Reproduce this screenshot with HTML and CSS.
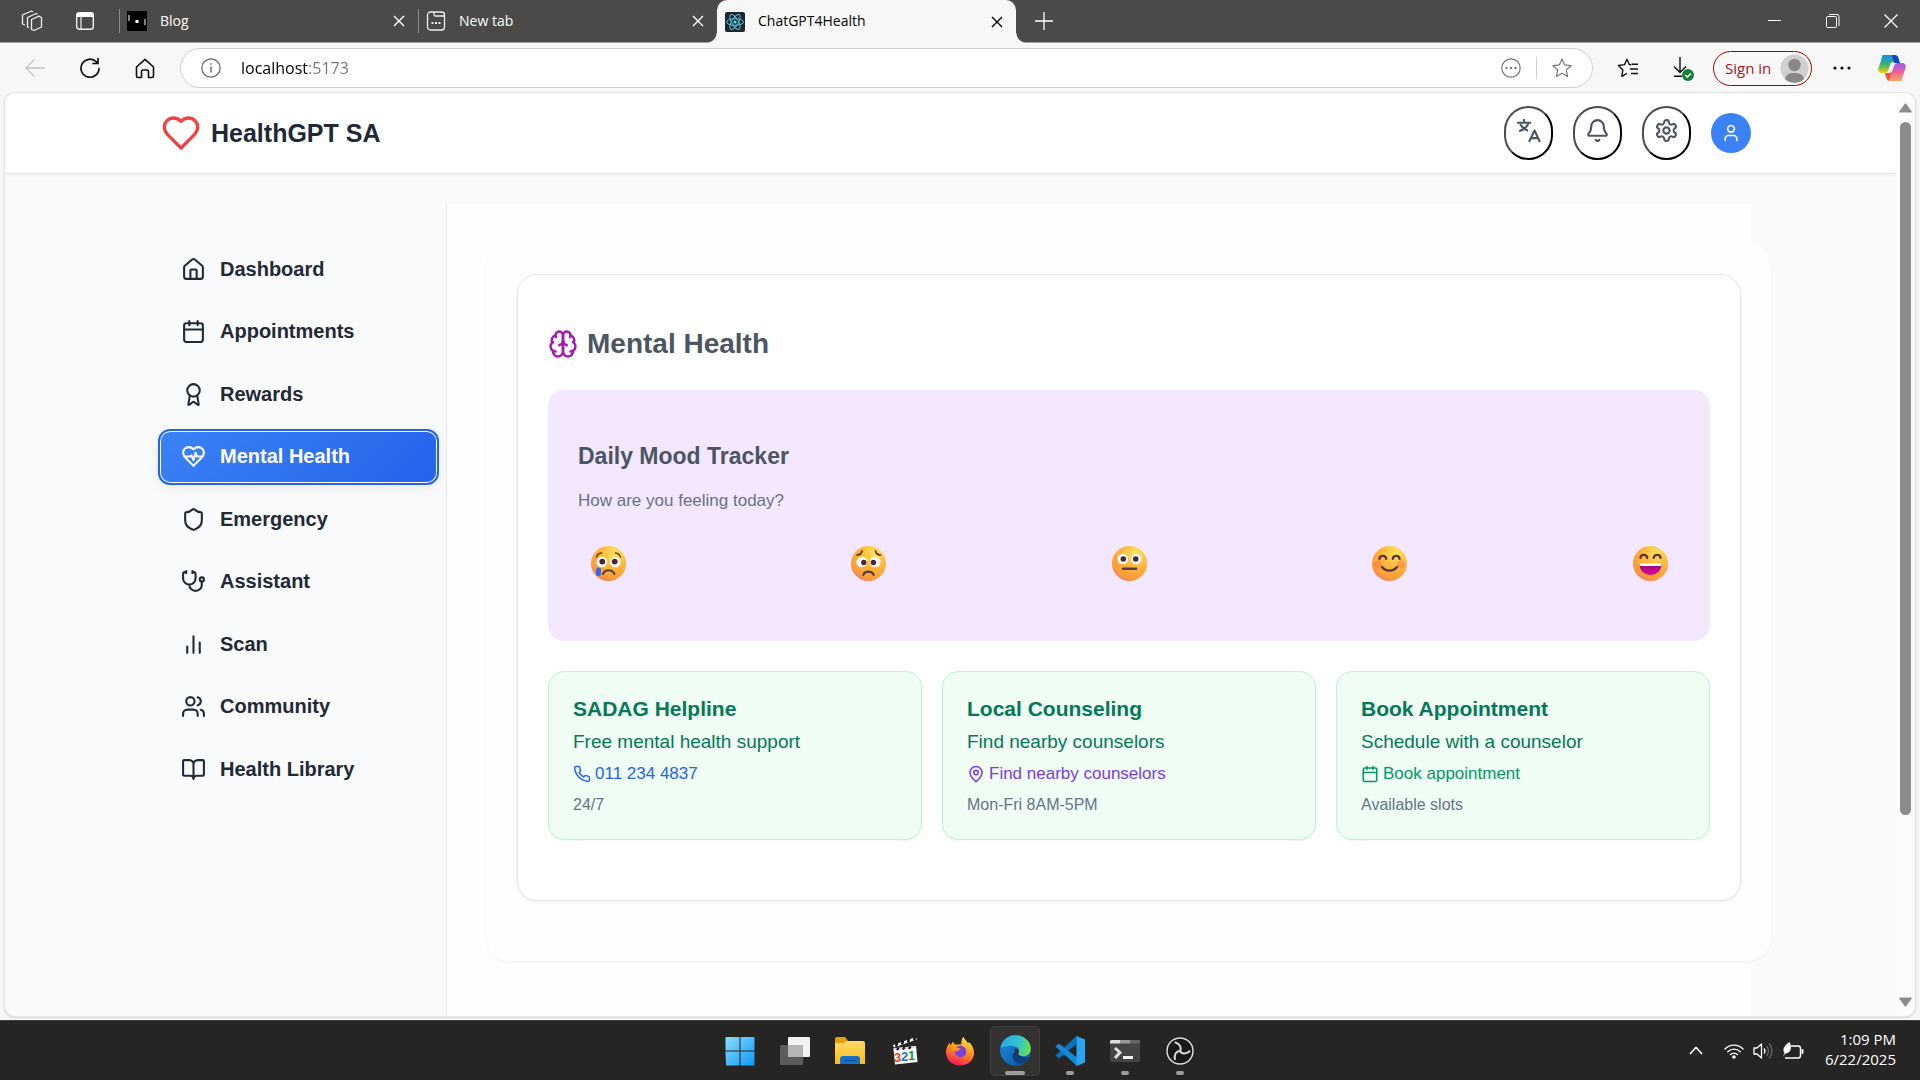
FILE: index.html
```html
<!DOCTYPE html>
<html lang="en">
<head>
<meta charset="utf-8">
<meta name="viewport" content="width=device-width, initial-scale=1">
<title>ChatGPT4Health</title>
<link rel="stylesheet" href="styles.css">
</head>
<body>
<svg class="defs" aria-hidden="true">
  <defs>
    <radialGradient id="face" cx="0.68" cy="0.2" r="0.95">
      <stop offset="0" stop-color="#ffe45c"/><stop offset="0.45" stop-color="#fdb53c"/><stop offset="0.78" stop-color="#fb9c37"/><stop offset="1" stop-color="#e8618c"/>
    </radialGradient>
    <linearGradient id="mouth" x1="0" y1="0" x2="0" y2="1"><stop offset="0" stop-color="#8b0a93"/><stop offset="1" stop-color="#e5088a"/></linearGradient>
    <linearGradient id="win" x1="0" y1="0" x2="1" y2="1"><stop offset="0" stop-color="#8be0fb"/><stop offset="1" stop-color="#0c97f4"/></linearGradient>
    <linearGradient id="folder" x1="0" y1="0" x2="0" y2="1"><stop offset="0" stop-color="#ffd968"/><stop offset="1" stop-color="#fbbd1d"/></linearGradient>
    <linearGradient id="fox" x1="0.7" y1="0" x2="0.3" y2="1"><stop offset="0" stop-color="#ffe83f"/><stop offset="0.5" stop-color="#ff8a1c"/><stop offset="1" stop-color="#f5135f"/></linearGradient>
    <linearGradient id="edgeTop" x1="0" y1="0.4" x2="1" y2="0.6"><stop offset="0" stop-color="#29a8e8"/><stop offset="0.6" stop-color="#34c6c6"/><stop offset="1" stop-color="#6ddf4c"/></linearGradient>
    <linearGradient id="edgeLow" x1="0" y1="0" x2="1" y2="1"><stop offset="0" stop-color="#1c8fe0"/><stop offset="1" stop-color="#0b4f9e"/></linearGradient>
    <linearGradient id="copA" x1="0" y1="0" x2="0" y2="1"><stop offset="0" stop-color="#1b8fe6"/><stop offset="0.5" stop-color="#2fb27a"/><stop offset="1" stop-color="#f5d000"/></linearGradient>
    <linearGradient id="copB" x1="0" y1="0" x2="0" y2="1"><stop offset="0" stop-color="#a05af0"/><stop offset="0.5" stop-color="#ee5f9c"/><stop offset="1" stop-color="#fbaa60"/></linearGradient>
  </defs>
</svg>

<div class="desktop">
  <div class="tabstrip">
    <div class="strip-tools">
      <button class="chrome-btn" aria-label="Workspaces"><svg width="22" height="22" viewBox="0 0 22 22" fill="none" stroke="#eee" stroke-width="1.3" stroke-linejoin="round"><path d="M10.500 9.500L18 6.200l2.500 1.300v9.500L13 20.500l-2.500-1zM8 17.500L6.500 17V7.500L15 3.500l1.500.8M4 15L1.500 14V5L10.500 1l1.500.8"/></svg></button>
      <button class="chrome-btn" aria-label="Tab actions"><svg width="20" height="20" viewBox="0 0 20 20"><rect x="1.700" y="1.700" width="16.600" height="16.600" rx="2.500" fill="none" stroke="#eee" stroke-width="1.400"/><path d="M1.500 6V3.500a2 2 0 0 1 2-2h13a2 2 0 0 1 2 2V6z" fill="#fff"/><path d="M6 6v12" stroke="#eee" stroke-width="1.200"/></svg></button>
    </div>
    <div class="tab">
      <svg width="20" height="20" viewBox="0 0 20 20"><path d="M0 0h20v20H0z"/><path d="M2 4v6M18 8v6" stroke="#fff"/><path d="M8.500 9h3v3h-3z" fill="#fff"/></svg>
      <span class="tab-title">Blog</span>
      <button class="tab-close" aria-label="Close tab"><svg width="12" height="12" viewBox="0 0 12 12"><path d="M1 1l10 10M11 1L1 11" stroke="currentColor" stroke-width="1.400"/></svg></button>
    </div>
    <div class="tab">
      <svg width="20" height="20" viewBox="0 0 20 20" fill="none" stroke="#eee" stroke-width="1.300"><rect x="1.500" y="1" width="17" height="18" rx="3"/><path d="M8 1v2.500A1.500 1.500 0 0 0 9.500 5h9"/><path d="M5.500 12h2M9 12h2M12.500 12h2" stroke-width="2"/></svg>
      <span class="tab-title">New tab</span>
      <button class="tab-close" aria-label="Close tab"><svg width="12" height="12" viewBox="0 0 12 12"><path d="M1 1l10 10M11 1L1 11" stroke="currentColor" stroke-width="1.400"/></svg></button>
    </div>
    <div class="tab tab-active">
      <svg width="20" height="20" viewBox="0 0 20 20"><rect width="20" height="20" rx="2" fill="#23272d"/><g fill="none" stroke="#4cc3dc" stroke-width="1"><ellipse cx="10" cy="10" rx="8.500" ry="3.300"/><ellipse cx="10" cy="10" rx="8.500" ry="3.300" transform="rotate(60 10 10)"/><ellipse cx="10" cy="10" rx="8.500" ry="3.300" transform="rotate(120 10 10)"/></g><circle cx="10" cy="10" r="1.600" fill="#61dafb"/></svg>
      <span class="tab-title">ChatGPT4Health</span>
      <button class="tab-close" aria-label="Close tab"><svg width="12" height="12" viewBox="0 0 12 12"><path d="M1 1l10 10M11 1L1 11" stroke="currentColor" stroke-width="1.400"/></svg></button>
    </div>
    <button class="chrome-btn" aria-label="New tab"><svg width="18" height="18" viewBox="0 0 18 18"><path d="M9 0v18M0 9h18" stroke="#fff" stroke-width="1.300"/></svg></button>
    <div class="window-controls">
      <button class="chrome-btn" aria-label="Minimize"><svg width="14" height="14" viewBox="0 0 14 14"><path d="M0 6.500h13" stroke="#fff"/></svg></button>
      <button class="chrome-btn" aria-label="Restore"><svg width="14" height="14" viewBox="0 0 14 14" fill="none" stroke="#fff"><path d="M.5 3.500a1 1 0 0 1 1-1h8a1 1 0 0 1 1 1v9a1 1 0 0 1-1 1h-8a1 1 0 0 1-1-1zM3 .5h8a2 2 0 0 1 2 2V12"/></svg></button>
      <button class="chrome-btn" aria-label="Close"><svg width="14" height="14" viewBox="0 0 14 14"><path d="M.5 .5l13 13M13.500 .5l-13 13" stroke="#fff" stroke-width="1.200"/></svg></button>
    </div>
  </div>

  <div class="toolbar">
    <button class="chrome-btn" aria-label="Back" disabled><svg width="20" height="18" viewBox="0 0 20 18" fill="none" stroke="#c4c4c4" stroke-width="1.300"><path d="M20 9H1M9.500 .5L1 9l8.500 8.500"/></svg></button>
    <button class="chrome-btn" aria-label="Refresh"><svg width="22" height="22" viewBox="0 0 22 22" fill="none" stroke="#111" stroke-width="1.700" stroke-linecap="round" stroke-linejoin="round"><path d="M20 11.500A9 9 0 1 1 17.500 5L19 6.500M19 1.500v5h-5"/></svg></button>
    <button class="chrome-btn" aria-label="Home"><svg width="20" height="21" viewBox="0 0 20 21" fill="none" stroke="#111" stroke-width="1.600" stroke-linejoin="round"><path d="M1.500 9L10 1.300 18.500 9v9a1.500 1.500 0 0 1-1.500 1.500h-3.500v-6a1.500 1.500 0 0 0-1.500-1.500H8a1.500 1.500 0 0 0-1.500 1.500v6H3A1.500 1.500 0 0 1 1.500 18z"/></svg></button>
    <div class="address">
      <svg width="20" height="20" viewBox="0 0 20 20" fill="none" stroke="#666" stroke-width="1.200"><circle cx="10" cy="10" r="9.200"/><path d="M10 8.500v6M10 5.200v1.500" stroke-width="1.400"/></svg>
      <input class="url" type="text" value="localhost:5173" aria-label="Address">
      <button class="address-btn" aria-label="More actions"><svg width="20" height="20" viewBox="0 0 20 20"><circle cx="10" cy="10" r="9.200" fill="none" stroke="#777" stroke-width="1.200"/><g fill="#777"><circle cx="5.500" cy="10" r="1.200"/><circle cx="10" cy="10" r="1.200"/><circle cx="14.500" cy="10" r="1.200"/></g></svg></button>
      <span class="address-sep"></span>
      <button class="address-btn" aria-label="Add to favorites"><svg width="20" height="20" viewBox="0 0 20 20" fill="none" stroke="#777" stroke-width="1.200" stroke-linejoin="round"><path d="M10 1l2.700 5.900 6.300.8-4.700 4.400 1.300 6.400L10 15.300l-5.600 3.200 1.300-6.400L1 7.700l6.300-.8z"/></svg></button>
    </div>
    <button class="chrome-btn" aria-label="Favorites"><svg width="22" height="20" viewBox="0 0 22 20" fill="none" stroke="#111" stroke-width="1.400" stroke-linejoin="round"><path d="M14 6.800l-1.700-.3L10 1.300 7.500 6.600 1.500 7.500l4.300 4.600-1 6.200L10 15.400M14.500 6.200H21M13 11h8M14 15.500h7"/></svg></button>
    <button class="chrome-btn" aria-label="Downloads"><svg width="22" height="26" viewBox="0 0 22 26" fill="none"><path d="M8 2v15M2 11.500l6 6 6-6M2 21.300h8" stroke="#111" stroke-width="1.400"/><circle cx="16" cy="20" r="6" fill="#168039"/><path d="M13.300 20l2 2 3.600-3.600" stroke="#fff" stroke-width="1.400"/></svg></button>
    <button class="signin"><span>Sign in</span><svg width="29" height="29" viewBox="0 0 29 29"><circle cx="14.500" cy="14.500" r="14" fill="#d2d0ce"/><circle cx="14.500" cy="11" r="6.200" fill="#8a8886"/><path d="M5 25c1-5 5-6 9.500-6s8.500 1 9.500 6a14 14 0 0 1-19 0z" fill="#8a8886"/></svg></button>
    <button class="chrome-btn" aria-label="Settings and more"><svg width="18" height="6" viewBox="0 0 18 6" fill="#111"><circle cx="2" cy="3" r="1.600"/><circle cx="9" cy="3" r="1.600"/><circle cx="16" cy="3" r="1.600"/></svg></button>
    <button class="chrome-btn copilot" aria-label="Copilot"><svg width="28" height="26" viewBox="0 0 28 26"><path d="M5 0h11c2 0 3 1.500 3.500 3l1 4h-5c-2 0-3 1-3.500 3l-1.500 5c-.7 2-2 3-4 3H4c-3 0-4.500-2-3.500-5l3-9C4 1.500 4 0 5 0z" fill="url(#copA)"/><path d="M14 0h3c2 0 3 1.500 3.500 3l1.500 5h-6z" fill="#1247c4"/><path d="M23 26H12c-2 0-3-1.500-3.500-3L7 18h4c2 0 3-1 3.500-3l1.500-4c.7-2 2-3 4-3h4c3 0 4.500 2 3.500 5l-3 9c-.5 2.500-.5 4-1.500 4z" fill="url(#copB)"/><path d="M7 18h5l1.500-1L11 26c-1.500-.5-2-2-2.500-3z" fill="#f2542d"/></svg></button>
  </div>

  <div class="viewport">
    <div class="page">
      <header class="app-header">
        <div class="brand">
          <svg class="lucide" width="40" height="40" viewBox="0 0 24 24"><path d="M19 14c1.490-1.460 3-3.210 3-5.500A5.500 5.500 0 0 0 16.500 3c-1.760 0-3 .5-4.500 2-1.500-1.500-2.740-2-4.500-2A5.500 5.500 0 0 0 2 8.500c0 2.300 1.500 4.050 3 5.500l7 7Z"/></svg>
          <h1>HealthGPT SA</h1>
        </div>
        <div class="header-actions">
          <button class="round-btn" aria-label="Language"><svg class="lucide" width="25" height="25" viewBox="0 0 24 24"><path d="M1 4.500h13.500M7.800 1v3.500M12 4.800c-1.200 3.700-4.500 6.500-9 8M4 6c1.800 3.300 4.500 5 7.500 6.200M12.500 23L17.800 12l5.200 11M14.300 19.300h7" stroke-linecap="butt"/></svg></button>
          <button class="round-btn" aria-label="Notifications"><svg class="lucide" width="25" height="25" viewBox="0 0 24 24"><path d="M10.268 21a2 2 0 0 0 3.464 0M3.262 15.326A1 1 0 0 0 4 17h16a1 1 0 0 0 .74-1.673C19.410 13.956 18 12.499 18 8A6 6 0 0 0 6 8c0 4.499-1.411 5.956-2.738 7.326"/></svg></button>
          <button class="round-btn" aria-label="Settings"><svg class="lucide" width="25" height="25" viewBox="0 0 24 24"><path d="M12.220 2h-.44a2 2 0 0 0-2 2v.18a2 2 0 0 1-1 1.730l-.43.25a2 2 0 0 1-2 0l-.15-.08a2 2 0 0 0-2.730.73l-.22.38a2 2 0 0 0 .73 2.730l.15.1a2 2 0 0 1 1 1.720v.51a2 2 0 0 1-1 1.740l-.15.09a2 2 0 0 0-.73 2.730l.22.38a2 2 0 0 0 2.730.73l.15-.08a2 2 0 0 1 2 0l.43.25a2 2 0 0 1 1 1.730V20a2 2 0 0 0 2 2h.44a2 2 0 0 0 2-2v-.18a2 2 0 0 1 1-1.730l.43-.25a2 2 0 0 1 2 0l.15.08a2 2 0 0 0 2.730-.73l.22-.39a2 2 0 0 0-.73-2.730l-.15-.08a2 2 0 0 1-1-1.740v-.5a2 2 0 0 1 1-1.740l.15-.09a2 2 0 0 0 .73-2.730l-.22-.38a2 2 0 0 0-2.730-.73l-.15.08a2 2 0 0 1-2 0l-.43-.25a2 2 0 0 1-1-1.730V4a2 2 0 0 0-2-2z"/><circle cx="12" cy="12" r="3"/></svg></button>
          <button class="avatar" aria-label="Account"><svg class="lucide" width="20" height="20" viewBox="0 0 24 24"><circle cx="12" cy="7" r="4"/><path d="M19 21v-2a4 4 0 0 0-4-4H9a4 4 0 0 0-4 4v2"/></svg></button>
        </div>
      </header>

      <div class="layout">
        <nav class="sidebar" aria-label="Main">
          <button class="nav-item"><svg class="lucide" width="25" height="25" viewBox="0 0 24 24"><path d="M15 21v-8a1 1 0 0 0-1-1h-4a1 1 0 0 0-1 1v8M3 10a2 2 0 0 1 .709-1.528l7-5.999a2 2 0 0 1 2.582 0l7 5.999A2 2 0 0 1 21 10v9a2 2 0 0 1-2 2H5a2 2 0 0 1-2-2z"/></svg>Dashboard</button>
          <button class="nav-item"><svg class="lucide" width="25" height="25" viewBox="0 0 24 24"><path d="M8 2v4M16 2v4M3 10h18"/><rect x="3" y="4" width="18" height="18" rx="2"/></svg>Appointments</button>
          <button class="nav-item"><svg class="lucide" width="25" height="25" viewBox="0 0 24 24"><path d="m15.477 12.890 1.515 8.526a.5.5 0 0 1-.81.47l-3.580-2.687a1 1 0 0 0-1.197 0l-3.586 2.686a.5.5 0 0 1-.81-.469l1.514-8.526"/><circle cx="12" cy="8" r="6"/></svg>Rewards</button>
          <button class="nav-item nav-active" aria-current="page"><svg class="lucide" width="25" height="25" viewBox="0 0 24 24"><path d="M19 14c1.490-1.460 3-3.210 3-5.500A5.500 5.500 0 0 0 16.500 3c-1.760 0-3 .5-4.500 2-1.500-1.500-2.740-2-4.500-2A5.500 5.500 0 0 0 2 8.500c0 2.300 1.500 4.050 3 5.500l7 7Z"/><path d="M3.220 12H9.500l.5-1 2 4.500 2-7 1.500 3.500h5.270"/></svg>Mental Health</button>
          <button class="nav-item"><svg class="lucide" width="25" height="25" viewBox="0 0 24 24"><path d="M20 13c0 5-3.500 7.500-7.660 8.950a1 1 0 0 1-.67-.01C7.500 20.500 4 18 4 13V6a1 1 0 0 1 1-1c2 0 4.500-1.200 6.240-2.720a1.170 1.170 0 0 1 1.520 0C14.510 3.810 17 5 19 5a1 1 0 0 1 1 1z"/></svg>Emergency</button>
          <button class="nav-item"><svg class="lucide" width="25" height="25" viewBox="0 0 24 24"><path d="M11 2v2M5 2v2M5 3H4a2 2 0 0 0-2 2v4a6 6 0 0 0 12 0V5a2 2 0 0 0-2-2h-1M8 15a6 6 0 0 0 12 0v-3"/><circle cx="20" cy="10" r="2"/></svg>Assistant</button>
          <button class="nav-item"><svg class="lucide" width="25" height="25" viewBox="0 0 24 24"><path d="M18 20V10M12 20V4M6 20v-6"/></svg>Scan</button>
          <button class="nav-item"><svg class="lucide" width="25" height="25" viewBox="0 0 24 24"><path d="M16 21v-2a4 4 0 0 0-4-4H6a4 4 0 0 0-4 4v2M22 21v-2a4 4 0 0 0-3-3.870M16 3.130a4 4 0 0 1 0 7.750"/><circle cx="9" cy="7" r="4"/></svg>Community</button>
          <button class="nav-item"><svg class="lucide" width="25" height="25" viewBox="0 0 24 24"><path d="M12 7v14M3 18a1 1 0 0 1-1-1V4a1 1 0 0 1 1-1h5a4 4 0 0 1 4 4 4 4 0 0 1 4-4h5a1 1 0 0 1 1 1v13a1 1 0 0 1-1 1h-6a3 3 0 0 0-3 3 3 3 0 0 0-3-3z"/></svg>Health Library</button>
        </nav>

        <main class="content">
          <div class="panel">
            <section class="card">
              <h2><svg class="lucide" width="30" height="30" viewBox="0 0 24 24"><path d="M12 5a3 3 0 1 0-5.997.125 4 4 0 0 0-2.526 5.770 4 4 0 0 0 .556 6.588A4 4 0 1 0 12 18Z"/><path d="M12 5a3 3 0 1 1 5.997.125 4 4 0 0 1 2.526 5.770 4 4 0 0 1-.556 6.588A4 4 0 1 1 12 18Z"/><path d="M15 13a4.500 4.500 0 0 1-3-4 4.500 4.500 0 0 1-3 4M17.599 6.500a3 3 0 0 0 .399-1.375M6.003 5.125A3 3 0 0 0 6.401 6.500M3.477 10.896a4 4 0 0 1 .585-.396M19.938 10.500a4 4 0 0 1 .585.396M6 18a4 4 0 0 1-1.967-.516M19.967 17.484A4 4 0 0 1 18 18"/></svg>Mental Health</h2>

              <div class="mood">
                <h3>Daily Mood Tracker</h3>
                <p>How are you feeling today?</p>
                <div class="mood-row">
                  <button class="mood-btn" aria-label="Very sad"><svg width="35" height="35" viewBox="0 0 35 35"><circle cx="17.500" cy="17.500" r="17.500" fill="url(#face)"/><circle cx="10.800" cy="16" r="5.300" fill="#fff"/><circle cx="24.200" cy="16" r="5.300" fill="#fff"/><circle cx="11.300" cy="15.600" r="2.900" fill="#4b2436"/><circle cx="23.700" cy="15.600" r="2.900" fill="#4b2436"/><path d="M5.500 11c1-2.500 3-3.800 5-4M29.500 11c-1-2.500-3-3.800-5-4" fill="none" stroke="#5f3228" stroke-width="1.500" stroke-linecap="round"/><path d="M12 28c2-5 9-5 11.500 0" fill="none" stroke="#573a4a" stroke-width="2.100" stroke-linecap="round"/><rect x="5" y="21.500" width="5" height="8.500" rx="2.500" fill="#3566f3"/></svg></button>
                  <button class="mood-btn" aria-label="Sad"><svg width="35" height="35" viewBox="0 0 35 35"><circle cx="17.500" cy="17.500" r="17.500" fill="url(#face)"/><circle cx="10.800" cy="16" r="5.300" fill="#fff"/><circle cx="24.200" cy="16" r="5.300" fill="#fff"/><circle cx="12.800" cy="16.500" r="2.700" fill="#4b2436"/><circle cx="22.400" cy="16.500" r="2.700" fill="#4b2436"/><path d="M6 9c2.500 0 4.500-1.500 5-4M29.500 9c-2.500 0-4.500-1.500-5-4" fill="none" stroke="#5f3228" stroke-width="1.700" stroke-linecap="round"/><path d="M12.300 29c1.500-4.500 8.500-4.500 10.500 0" fill="none" stroke="#573a4a" stroke-width="2.100" stroke-linecap="round"/></svg></button>
                  <button class="mood-btn" aria-label="Neutral"><svg width="35" height="35" viewBox="0 0 35 35"><circle cx="17.500" cy="17.500" r="17.500" fill="url(#face)"/><circle cx="10.800" cy="13" r="5.200" fill="#fff"/><circle cx="24.200" cy="13" r="5.200" fill="#fff"/><circle cx="11.300" cy="13" r="2.800" fill="#4b2436"/><circle cx="23.700" cy="13" r="2.800" fill="#4b2436"/><path d="M11 22.700h13" stroke="#5b3b52" stroke-width="2.600" stroke-linecap="round"/></svg></button>
                  <button class="mood-btn" aria-label="Happy"><svg width="35" height="35" viewBox="0 0 35 35"><circle cx="17.500" cy="17.500" r="17.500" fill="url(#face)"/><circle cx="6" cy="18.500" r="4" fill="#fb6f50" opacity="0.450"/><circle cx="29" cy="18.500" r="4" fill="#fb6f50" opacity="0.450"/><path d="M7.300 13c.5-4.300 6.400-4.300 7 0M20.700 13c.5-4.300 6.400-4.300 7 0" fill="none" stroke="#59363f" stroke-width="2.200" stroke-linecap="round"/><path d="M10 21c3.500 4.700 11.500 4.700 15 0" fill="none" stroke="#59363f" stroke-width="2.200" stroke-linecap="round"/></svg></button>
                  <button class="mood-btn" aria-label="Very happy"><svg width="35" height="35" viewBox="0 0 35 35"><circle cx="17.500" cy="17.500" r="17.500" fill="url(#face)"/><path d="M7.300 12c.5-4.300 6.400-4.300 7 0M20.700 12c.5-4.300 6.400-4.300 7 0" fill="none" stroke="#59363f" stroke-width="2.200" stroke-linecap="round"/><path d="M6.500 17.500h22c.3 6.500-4.500 11.500-11 11.500s-11.300-5-11-11.500z" fill="url(#mouth)"/><path d="M6.500 17.300h22v1.200c0 1-.6 1.500-1.500 1.500H8c-.9 0-1.500-.5-1.500-1.500z" fill="#fff"/></svg></button>
                </div>
              </div>

              <div class="resources">
                <article class="resource">
                  <h3>SADAG Helpline</h3>
                  <p>Free mental health support</p>
                  <a class="link-blue" href="#call"><svg class="lucide" width="18" height="18" viewBox="0 0 24 24"><path d="M22 16.920v3a2 2 0 0 1-2.180 2 19.790 19.790 0 0 1-8.630-3.070 19.500 19.500 0 0 1-6-6 19.790 19.790 0 0 1-3.070-8.670A2 2 0 0 1 4.110 2h3a2 2 0 0 1 2 1.720 12.840 12.840 0 0 0 .7 2.810 2 2 0 0 1-.45 2.110L8.090 9.910a16 16 0 0 0 6 6l1.270-1.270a2 2 0 0 1 2.110-.45 12.840 12.840 0 0 0 2.810.7A2 2 0 0 1 22 16.920z"/></svg>011 234 4837</a>
                  <small>24/7</small>
                </article>
                <article class="resource">
                  <h3>Local Counseling</h3>
                  <p>Find nearby counselors</p>
                  <a class="link-purple" href="#nearby"><svg class="lucide" width="18" height="18" viewBox="0 0 24 24"><path d="M20 10c0 4.993-5.539 10.193-7.399 11.799a1 1 0 0 1-1.202 0C9.539 20.193 4 14.993 4 10a8 8 0 0 1 16 0"/><circle cx="12" cy="10" r="3"/></svg>Find nearby counselors</a>
                  <small>Mon-Fri 8AM-5PM</small>
                </article>
                <article class="resource">
                  <h3>Book Appointment</h3>
                  <p>Schedule with a counselor</p>
                  <a class="link-green" href="#book"><svg class="lucide" width="18" height="18" viewBox="0 0 24 24"><path d="M8 2v4M16 2v4M3 10h18"/><rect x="3" y="4" width="18" height="18" rx="2"/></svg>Book appointment</a>
                  <small>Available slots</small>
                </article>
              </div>
            </section>
          </div>
        </main>
      </div>
    </div>
    <div class="scrollbar" aria-hidden="true">
      <svg width="13" height="10" viewBox="0 0 13 10"><path d="M6.500 .5L12.500 9H.5z" fill="#8b8b8b" stroke="#8b8b8b" stroke-linejoin="round"/></svg>
      <div class="scroll-track"><div class="scroll-thumb"></div></div>
      <svg width="13" height="10" viewBox="0 0 13 10"><path d="M6.500 9.500L12.500 1H.5z" fill="#8b8b8b" stroke="#8b8b8b" stroke-linejoin="round"/></svg>
    </div>
  </div>

  <div class="taskbar">
    <div class="apps">
      <button class="app" aria-label="Start"><svg width="30" height="30" viewBox="0 0 30 30" fill="url(#win)"><path d="M1 1h13.500v13.500H.5V1.500zM15.500 1h14v13.500h-14zM.5 15.500h14v14H1zM15.500 15.500h14v14h-14z"/></svg></button>
      <button class="app" aria-label="Task view"><svg width="30" height="30" viewBox="0 0 30 30"><rect x="8" y="1" width="22" height="20" rx="1" fill="#f3f3f3"/><rect x="0" y="9" width="23" height="20" rx="1" fill="#666" opacity="0.850"/><rect x="8" y="9" width="15" height="12" fill="#b5b5b5"/></svg></button>
      <button class="app" aria-label="File Explorer"><svg width="30" height="28" viewBox="0 0 30 28"><path d="M0 2a2 2 0 0 1 2-2h8l3 4-3 4H0z" fill="#e0a00b"/><path d="M0 6h9l3-2h16a2 2 0 0 1 2 2v21H0z" fill="url(#folder)"/><path d="M5 27v-5a3 3 0 0 1 3-3h14a3 3 0 0 1 3 3v5z" fill="#1173c7"/><path d="M9 23.500h12" stroke="#0a4c8c" stroke-width="1.200"/></svg></button>
      <button class="app" aria-label="Media Player Classic"><svg width="30" height="30" viewBox="0 0 30 30"><path d="M3.500 12.500L26 10l1.500 16L5 28.500z" fill="#fff"/><path d="M3 9L26 1l.8 2.500L4 11.500z" fill="#fff"/><path d="M6 10.500l1-3.500M12 8.500l1-3.500M18 6.500l1-3.500M24 4.500l1-3.500" stroke="#111" stroke-width="2.500"/><path d="M3.500 12.300L26 10l.2 2L3.700 14.500z" fill="#ddd"/><path d="M7 14.200l1.500-2.300M13 13.500l1.500-2.300M19 12.900l1.500-2.300" stroke="#111" stroke-width="2.200"/><text class="clap c3" x="4" y="26">3</text><text class="clap c2" x="11" y="25">2</text><text class="clap c1" x="18" y="24">1</text></svg></button>
      <button class="app" aria-label="Firefox"><svg width="30" height="30" viewBox="0 0 30 30"><path d="M15 29.500C7 29.500 1 24 1 16c0-4 1.500-7 4-9.500l.5 3L8 5.500c.5 1.500 1 2.500 2.500 3H16c1-2.500 0-5.500 2.500-7.500 1 3 3.500 3.500 4.500 6.500l1-1.500c3 3 5 6.500 5 11 0 7-6 12.500-14 12.500z" fill="url(#fox)"/><circle cx="15.500" cy="15.500" r="5.800" fill="#7a3fe0"/><path d="M6 12c3-1.500 7-.5 10 1-2 .5-3 2.500-5.500 2.500z" fill="#ff9b22"/></svg></button>
      <button class="app app-current" aria-label="Edge"><svg width="31" height="31" viewBox="0 0 30 30"><circle cx="15" cy="15" r="14.800" fill="url(#edgeLow)"/><path d="M.5 13C1 6 7 .2 15 .2c8.500 0 14.800 6 14.800 13 0 4.800-3.500 7.300-7.300 7.300-3 0-5-1-5-2 0-.8 1-1.200 1-3.200 0-2.800-3-5-7.500-5-4 0-8 1-10.500 2.700z" fill="url(#edgeTop)"/><path d="M17.500 18.500c0 2 4 5 9.500 3.500l1 .5c-3 5.500-9 6-12 4.500-5-2.500-5.500-10 .5-12.500 2 1.500.8 3 1 4z" fill="#0b3f86"/><path d="M14 13.500c2-1 4.500.3 4.300 2.500-.2 1-.8 1.500-.8 2.500 0 1.500 3.500 3.500 9.800 3-2 1.500-12 3-13.300-8z" fill="#333231"/></svg></button>
      <button class="app app-running" aria-label="Visual Studio Code"><svg width="30" height="30" viewBox="0 0 30 30"><path d="M21.500 0v8L4 22.500 .5 19.500z" fill="#0a72ba"/><path d="M.5 10.500L4 7.500 22 21.500V30z" fill="#1489d8"/><path d="M21.500 0L30 3.500v23L21.500 30z" fill="#2aa5f3"/></svg></button>
      <button class="app app-running" aria-label="Terminal"><svg width="30" height="22" viewBox="0 0 30 22"><rect width="30" height="22" rx="1.500" fill="#444"/><path d="M0 3.500V1.500A1.500 1.500 0 0 1 1.500 0H10v3.500z" fill="#ddd"/><path d="M10 0h10v3.500H10z" fill="#999"/><path d="M20 0h8.500A1.500 1.500 0 0 1 30 1.500v2H20z" fill="#666"/><path d="M5 8l5 4.500L5 18" fill="none" stroke="#ddd" stroke-width="3"/><path d="M13 17.500h10" stroke="#eee" stroke-width="3"/></svg></button>
      <button class="app app-running" aria-label="OBS Studio"><svg width="28" height="28" viewBox="0 0 28 28" fill="none" stroke="#dadada"><circle cx="14" cy="14" r="13" fill="#1a191b" stroke-width="1.500"/><g stroke-width="2" stroke-linecap="round"><path d="M14 14c2-3 0-7-4.500-8.500"/><path d="M14 14c2-3 0-7-4.500-8.500" transform="rotate(120 14 14)"/><path d="M14 14c2-3 0-7-4.500-8.500" transform="rotate(240 14 14)"/></g></svg></button>
    </div>
    <div class="tray">
      <button class="tray-btn" aria-label="Show hidden icons"><svg width="14" height="9" viewBox="0 0 14 9"><path d="M1 8l6-6.500L13 8" fill="none" stroke="#fff" stroke-width="1.600"/></svg></button>
      <button class="tray-btn" aria-label="Network, volume and battery">
        <svg width="20" height="16" viewBox="0 0 20 16" fill="none" stroke="#fff" stroke-width="1.400" stroke-linecap="round"><path d="M1 6a12.500 12.500 0 0 1 18 0M3.800 8.800a8.600 8.600 0 0 1 12.400 0M6.600 11.500a4.800 4.800 0 0 1 6.800 0"/><circle cx="10" cy="14" r="1.100" fill="#fff"/></svg>
        <svg width="20" height="18" viewBox="0 0 20 18" fill="none" stroke="#fff" stroke-width="1.300" stroke-linejoin="round"><path d="M1 6v6h3l4.500 4V2L4 6zM11 6.500q2 2.500 0 5"/><path d="M13.500 4q4 5 0 10M16 1.500q6 7.500 0 15" stroke="#666"/></svg>
        <svg width="22" height="18" viewBox="0 0 22 18"><path d="M9 4h7a2.500 2.500 0 0 1 2.500 2.500v7A2.500 2.500 0 0 1 16 16H3" fill="none" stroke="#fff" stroke-width="1.500"/><path d="M20 7.500h1v4h-1z" fill="#fff" stroke="#fff"/><path d="M1 14.500L2.500 11C-.5 7 3 3 7.500 0c2.500 4.500 2 11-4 11.500z" fill="#fff"/></svg>
      </button>
      <button class="clock"><span>1:09 PM</span><span>6/22/2025</span></button>
    </div>
  </div>
</div>
</body>
</html>
```

FILE: styles.css
```css
* { box-sizing: border-box; }

body {
  margin: 0;
  font-family: "Liberation Sans", Arial, sans-serif;
  color: #1f2937;
}

h1, h2, h3, p { margin: 0; }
svg { display: block; flex: none; }

button {
  font: inherit;
  color: inherit;
  background: none;
  border: 0;
  padding: 0;
}

a { text-decoration: none; }

.defs { position: absolute; width: 0; height: 0; }

.lucide {
  fill: none;
  stroke: currentColor;
  stroke-width: 2;
  stroke-linecap: round;
  stroke-linejoin: round;
}

.desktop {
  display: flex;
  flex-direction: column;
  height: 100vh;
  overflow: hidden;
  background: #f7f7f7;
}

/* Browser frame */
.tabstrip, .toolbar, .taskbar {
  font-family: "Open Sans", "Noto Sans", sans-serif;
  flex: none;
}

.tabstrip {
  display: flex;
  height: 43px;
  background: #4b4a48;
  border-bottom: 1px solid #a3a2a1;
  color: #fff;
  font-size: 14px;
}

.chrome-btn {
  width: 55px;
  display: flex;
  align-items: center;
  justify-content: center;
}

.strip-tools {
  display: flex;
  padding: 0 7px 0 5px;
  width: 119px;
}

.tab {
  display: flex;
  align-items: center;
  gap: 13px;
  width: 299px;
  padding: 0 11px 0 8px;
  position: relative;
  background: linear-gradient(#8b8a88, #8b8a88) 0 50% / 1px 24px no-repeat;
}

.tab-title {
  flex: 1;
  padding-bottom: 2px;
}

.tab-close {
  display: flex;
  align-items: center;
  justify-content: center;
  width: 16px;
  height: 24px;
}

.tab-active {
  background: #f7f7f7;
  color: #000;
  border-radius: 10px 10px 0 0;
  margin-bottom: -1px;
}

.tab-active::before, .tab-active::after {
  content: "";
  position: absolute;
  bottom: 0;
  width: 10px;
  height: 10px;
}

.tab-active::before {
  right: 100%;
  background: radial-gradient(circle at 0 0, #4b4a48 9px, #f7f7f7 10px);
}

.tab-active::after {
  left: 100%;
  background: radial-gradient(circle at 100% 0, #4b4a48 9px, #f7f7f7 10px);
}

.window-controls {
  display: flex;
  gap: 3px;
  margin-left: auto;
  padding-right: 2px;
}

.toolbar {
  display: flex;
  align-items: center;
  height: 50px;
  padding: 0 5px 0 7px;
}

.address {
  flex: 1;
  display: flex;
  align-items: center;
  height: 40px;
  margin: 0 7px 0 8px;
  padding: 0 20px;
  background: #fff;
  border: 1px solid #d0d0d0;
  border-radius: 20px;
}

.url {
  flex: 1;
  min-width: 0;
  height: 30px;
  margin-left: 20px;
  padding: 0;
  border: 0;
  outline: 0;
  font: inherit;
  font-size: 16px;
  color: #000;
  background: linear-gradient(90deg, #000 67px, #767676 67px);
  -webkit-background-clip: text;
  background-clip: text;
  -webkit-text-fill-color: transparent;
}

.address-sep {
  width: 1px;
  height: 22px;
  margin: 0 15px;
  background: #d0d0d0;
}

.signin {
  display: flex;
  align-items: center;
  justify-content: space-between;
  width: 99px;
  height: 35px;
  margin: 0 2px 0 3px;
  padding: 0 2px 0 11px;
  border: 1px solid #a80000;
  border-radius: 18px;
  color: #a4161a;
  font-size: 15px;
}

.copilot { width: 46px; }

.viewport {
  flex: 1;
  min-height: 0;
  display: flex;
  margin: 0 5px 4px;
  border-radius: 10px;
  overflow: hidden;
  background: #f9fafc;
  box-shadow: 0 0 0 1px #e6e6e6, 0 1px 2px 1px #d4d4d4;
}

.scrollbar {
  flex: none;
  width: 19px;
  display: flex;
  flex-direction: column;
  align-items: center;
  gap: 9px;
  padding: 10px 0 9px;
  background: #fcfcfc;
}

.scroll-track { flex: 1; }

.scroll-thumb {
  width: 11px;
  height: 80%;
  border-radius: 6px;
  background: #8b8b8b;
}

/* Application */
.page {
  flex: 1;
  min-width: 0;
  display: flex;
  flex-direction: column;
}

.app-header {
  flex: none;
  display: flex;
  align-items: center;
  justify-content: space-between;
  height: 81px;
  padding: 0 145px 0 156px;
  background: #fff;
  border-bottom: 1px solid #e5e7eb;
  box-shadow: 0 1px 3px rgba(0, 0, 0, 0.06);
}

.brand {
  display: flex;
  align-items: center;
  gap: 10px;
}

.brand svg { color: #ef4444; }

.brand h1 {
  font-size: 25px;
  line-height: 32px;
}

.header-actions {
  display: flex;
  align-items: center;
  gap: 20px;
}

.round-btn {
  width: 49px;
  height: 54px;
  padding-bottom: 5px;
  display: flex;
  align-items: center;
  justify-content: center;
  color: #4b5563;
  border: 2px solid;
  border-color: #4c4c4c #000 #000 #4c4c4c;
  border-radius: 25px;
}

.avatar {
  width: 40px;
  height: 40px;
  display: flex;
  align-items: center;
  justify-content: center;
  border-radius: 50%;
  background: #3b82f6;
  color: #fff;
}

.layout {
  flex: 1;
  min-height: 0;
  display: grid;
  grid-template-columns: 288px 1fr;
  padding: 30px 145px 0 153px;
}

.sidebar {
  display: flex;
  flex-direction: column;
  justify-content: space-between;
  align-self: start;
  min-height: 593px;
  padding: 37px 7px 0 0;
}

.nav-item {
  display: flex;
  align-items: center;
  gap: 14px;
  height: 56px;
  padding: 0 23px;
  border-radius: 12px;
  font-size: 20px;
  font-weight: 700;
  text-align: left;
}

.nav-active {
  color: #fff;
  padding: 0 21px;
  border: 2px solid #2563eb;
  background: linear-gradient(135deg, #3b82f6, #2563eb) padding-box;
  box-shadow: inset 0 0 0 1px #fff, 0 4px 12px rgba(0, 0, 0, 0.06);
}

.content {
  padding: 39px 0 0 39px;
  background: #fefefe;
  border-left: 1px solid #e5e7eb;
}

.panel {
  margin-right: -20px;
  padding: 31px 30px 60px 31px;
  border-radius: 24px;
  background: #fefefe;
  box-shadow: 0 1px 3px rgba(0, 0, 0, 0.05);
}

.card {
  padding: 49px 30px 60px;
  border: 1px solid #e5e7eb;
  border-radius: 20px;
  background: #fff;
  box-shadow: 0 1px 3px rgba(0, 0, 0, 0.08);
}

.card h2 {
  display: flex;
  align-items: center;
  gap: 9px;
  margin-bottom: 27px;
  font-size: 28px;
  line-height: 39px;
  color: #4b5563;
}

.card h2 svg { color: #a21caf; }

.mood {
  padding: 48px 30px 52px;
  margin-bottom: 30px;
  border-radius: 16px;
  background: #f3e8ff;
}

.mood h3 {
  font-size: 23px;
  line-height: 36px;
  color: #4b5563;
}

.mood p {
  margin: 13px 0 23px;
  font-size: 17px;
  line-height: 27px;
  color: #6b7280;
}

.mood-row {
  display: flex;
  justify-content: space-between;
}

.mood-btn {
  width: 60px;
  height: 52px;
  display: flex;
  align-items: center;
  justify-content: center;
}

.resources {
  display: grid;
  grid-template-columns: repeat(3, 1fr);
  gap: 20px;
}

.resource {
  display: flex;
  flex-direction: column;
  align-items: flex-start;
  gap: 8px;
  padding: 24px;
  border: 1px solid #bbf7d0;
  border-radius: 16px;
  background: #f0fdf4;
  box-shadow: 0 1px 2px rgba(0, 0, 0, 0.05);
  line-height: 24px;
}

.resource h3 {
  font-size: 21px;
  line-height: 26px;
  color: #047857;
}

.resource p {
  font-size: 19px;
  color: #047857;
}

.resource a {
  display: flex;
  align-items: center;
  gap: 4px;
  font-size: 17px;
}

.link-blue { color: #2563eb; }
.link-purple { color: #7c3aed; }
.link-green { color: #059669; }

.resource small {
  font-size: 16px;
  line-height: 21px;
  color: #64748b;
}

/* Taskbar */
.taskbar {
  display: grid;
  grid-template-columns: 1fr auto 1fr;
  align-items: center;
  height: 60px;
  background: #272524;
  border-top: 1px solid #403f3d;
  color: #fff;
}

.apps {
  grid-column: 2;
  display: flex;
  gap: 5px;
}

.app {
  position: relative;
  width: 50px;
  height: 50px;
  display: flex;
  align-items: center;
  justify-content: center;
  border-radius: 5px;
}

.app-current {
  background: #333231;
  box-shadow: inset 0 0 0 1px #3f3e3d;
}

.app-current::after, .app-running::after {
  content: "";
  position: absolute;
  bottom: 1px;
  width: 8px;
  height: 4px;
  border-radius: 2px;
  background: #9d9c9b;
}

.app-current::after { width: 20px; }

.clap {
  font: 700 13px "Liberation Sans", sans-serif;
}

.c3 { fill: #d9480f; }
.c2 { fill: #2b6fd0; }
.c1 { fill: #1d9426; }

.tray {
  justify-self: end;
  display: flex;
  align-items: center;
  gap: 21px;
  padding-right: 24px;
}

.tray-btn {
  display: flex;
  align-items: center;
  gap: 9px;
  height: 40px;
}

.clock {
  display: flex;
  flex-direction: column;
  align-items: flex-end;
  padding-bottom: 3px;
  font-size: 15px;
  line-height: 20px;
}
```
